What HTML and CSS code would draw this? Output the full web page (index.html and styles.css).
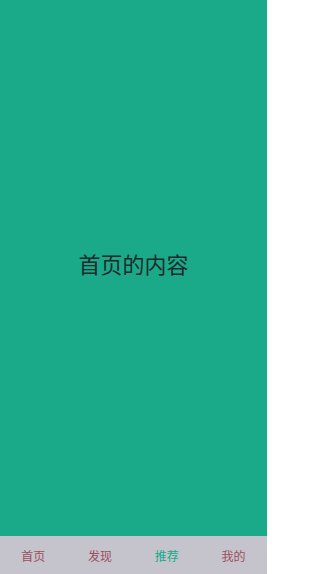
FILE: index.html
```html
<!DOCTYPE html>
<html lang="zh">
<head>
<meta charset="utf-8">
<link rel="stylesheet" href="styles.css">
</head>
<body>
<div class="app">
  <main class="content">
    <div class="title">首页的内容</div>
  </main>
  <nav class="tabbar">
    <div class="tab">首页</div>
    <div class="tab">发现</div>
    <div class="tab active">推荐</div>
    <div class="tab">我的</div>
  </nav>
</div>
</body>
</html>
```
FILE: styles.css
```css
html, body {
  margin: 0;
  padding: 0;
  height: 100%;
}
body {
  font-family: "Noto Sans CJK SC", "Noto Sans", sans-serif;
}
.app {
  display: flex;
  flex-direction: column;
  width: 267px;
  height: 574px;
}
.content {
  flex: 1;
  background: #1aaa8a;
  display: flex;
  align-items: center;
  justify-content: center;
}
.title {
  font-size: 22px;
  color: #1f2a2a;
  margin-bottom: 10px;
}
.tabbar {
  height: 38px;
  background: #c5c4cc;
  display: grid;
  grid-template-columns: repeat(4, 1fr);
  align-items: center;
}
.tab {
  text-align: center;
  font-size: 12px;
  color: #9c4f5c;
}
.tab.active {
  color: #1aaa8a;
}
```
